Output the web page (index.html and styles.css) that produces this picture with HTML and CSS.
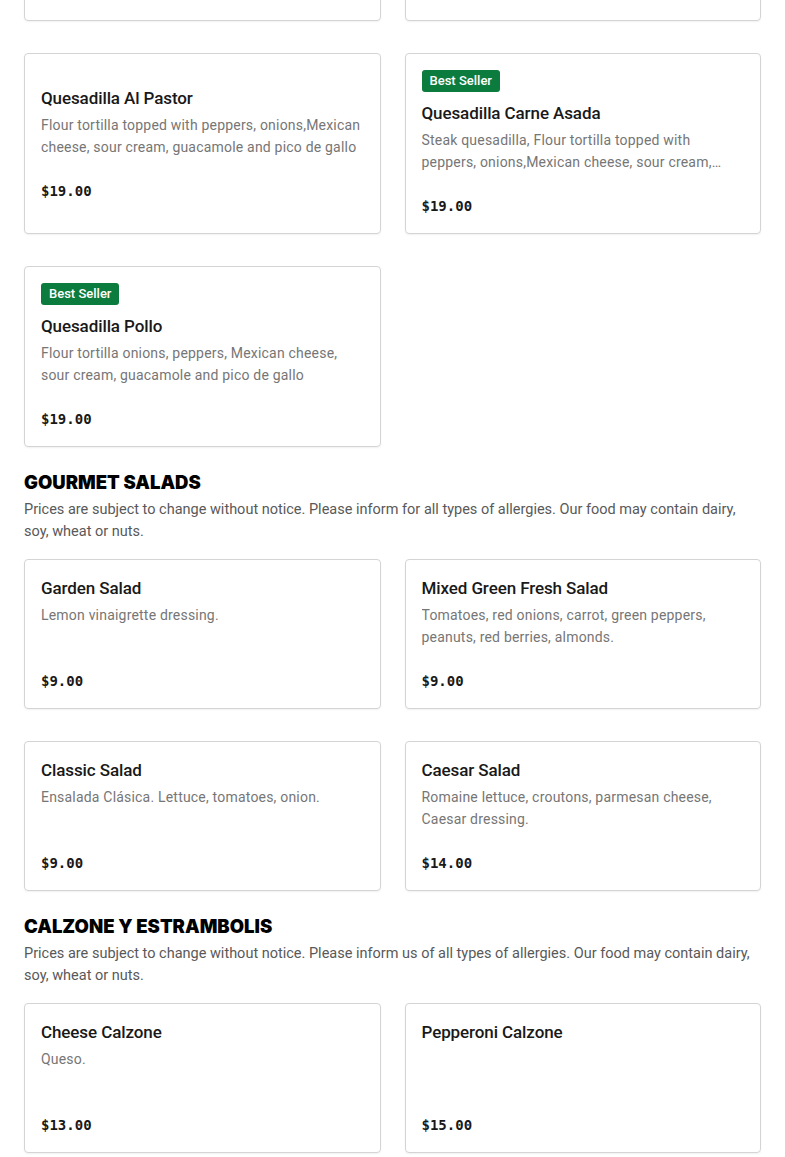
FILE: index.html
```html
<!DOCTYPE html>
<html lang="en">
<head>
    <meta charset="UTF-8">
    <meta name="viewport" content="width=device-width, initial-scale=1.0">
    <title>Menu</title>
    <link rel="stylesheet" href="styles.css">
</head>
<body>
    <div class="menu">
        <!-- Quesadillas -->
        <section class="category">
            <h2 class="category-title">QUESADILLAS</h2>
            <p class="category-note">Prices are subject to change without notice. Please inform us of all types of allergies. Our food may contain dairy, soy, wheat or nuts.</p>
            <div class="items">
                <div class="item">
                    <h3 class="item-name">Quesadilla de Queso</h3>
                    <p class="item-desc">Flour tortilla, Mexican cheese, sour cream, guacamole and pico de gallo</p>
                    <span class="item-price">$15.00</span>
                </div>
                <div class="item">
                    <h3 class="item-name">Quesadilla Camarones</h3>
                    <p class="item-desc">Shrimp quesadilla, Flour tortilla topped with peppers, onions, Mexican cheese</p>
                    <span class="item-price">$21.00</span>
                </div>
                <div class="item">
                    <h3 class="item-name">Quesadilla Al Pastor</h3>
                    <p class="item-desc">Flour tortilla topped with peppers, onions,Mexican cheese, sour cream, guacamole and pico de gallo</p>
                    <span class="item-price">$19.00</span>
                </div>
                <div class="item">
                    <span class="badge">Best Seller</span>
                    <h3 class="item-name">Quesadilla Carne Asada</h3>
                    <p class="item-desc">Steak quesadilla, Flour tortilla topped with peppers, onions,Mexican cheese, sour cream, guacamole and pico de gallo</p>
                    <span class="item-price">$19.00</span>
                </div>
                <div class="item">
                    <span class="badge">Best Seller</span>
                    <h3 class="item-name">Quesadilla Pollo</h3>
                    <p class="item-desc">Flour tortilla onions, peppers, Mexican cheese, sour cream, guacamole and pico de gallo</p>
                    <span class="item-price">$19.00</span>
                </div>
            </div>
        </section>

        <!-- Salads -->
        <section class="category">
            <h2 class="category-title">GOURMET SALADS</h2>
            <p class="category-note">Prices are subject to change without notice. Please inform for all types of allergies. Our food may contain dairy, soy, wheat or nuts.</p>
            <div class="items">
                <div class="item">
                    <h3 class="item-name">Garden Salad</h3>
                    <p class="item-desc">Lemon vinaigrette dressing.</p>
                    <span class="item-price">$9.00</span>
                </div>
                <div class="item">
                    <h3 class="item-name">Mixed Green Fresh Salad</h3>
                    <p class="item-desc">Tomatoes, red onions, carrot, green peppers, peanuts, red berries, almonds.</p>
                    <span class="item-price">$9.00</span>
                </div>
                <div class="item">
                    <h3 class="item-name">Classic Salad</h3>
                    <p class="item-desc">Ensalada Clásica. Lettuce, tomatoes, onion.</p>
                    <span class="item-price">$9.00</span>
                </div>
                <div class="item">
                    <h3 class="item-name">Caesar Salad</h3>
                    <p class="item-desc">Romaine lettuce, croutons, parmesan cheese, Caesar dressing.</p>
                    <span class="item-price">$14.00</span>
                </div>
            </div>
        </section>

        <!-- Calzones -->
        <section class="category">
            <h2 class="category-title">CALZONE Y ESTRAMBOLIS</h2>
            <p class="category-note">Prices are subject to change without notice. Please inform us of all types of allergies. Our food may contain dairy, soy, wheat or nuts.</p>
            <div class="items">
                <div class="item">
                    <h3 class="item-name">Cheese Calzone</h3>
                    <p class="item-desc">Queso.</p>
                    <span class="item-price">$13.00</span>
                </div>
                <div class="item">
                    <h3 class="item-name">Pepperoni Calzone</h3>
                    <p class="item-desc"></p>
                    <span class="item-price">$15.00</span>
                </div>
            </div>
        </section>
    </div>
</body>
</html>
```

FILE: styles.css
```css
body {
    margin: 0;
    padding: 0;
    background-color: #fff;
    font-family: 'Roboto', 'Liberation Sans', sans-serif;
    color: #191919;
}

/* page is shown scrolled down to the middle of the quesadillas */
.menu {
    display: flex;
    flex-direction: column;
    gap: 23px;
    padding: 0 24px 40px;
    margin-top: -218px;
}

.category-title {
    margin: 0;
    font-family: 'Inter', 'Liberation Sans', sans-serif;
    font-size: 18.5px;
    font-weight: 900;
    line-height: 24px;
    color: #000;
}

.category-note {
    margin: 5px 0 16px;
    font-size: 14.5px;
    line-height: 22px;
    color: #595959;
}

.items {
    display: grid;
    grid-template-columns: 1fr 1fr;
    gap: 32px 24px;
}

.item {
    display: flex;
    flex-direction: column;
    justify-content: center;
    align-items: flex-start;
    padding: 16px;
    border: 1px solid #d4d4d4;
    border-radius: 4px;
    box-shadow: 0 1px 2px rgba(0,0,0,0.06);
}

.badge {
    display: inline-block;
    height: 22px;
    line-height: 22px;
    padding: 0 8px;
    margin-bottom: 9px;
    background-color: #0b7b3e;
    color: #fff;
    font-size: 13px;
    font-weight: 500;
    border-radius: 3px;
}

.item-name {
    margin: 0;
    font-size: 17px;
    font-weight: 500;
    line-height: 24px;
    letter-spacing: -0.1px;
}

.item-desc {
    margin: 4px 0 22px;
    height: 44px;
    font-size: 14px;
    line-height: 22px;
    letter-spacing: 0.2px;
    color: #767676;
    display: -webkit-box;
    -webkit-line-clamp: 2;
    -webkit-box-orient: vertical;
    overflow: hidden;
}

.item-price {
    font-family: 'DejaVu Sans Mono', 'Liberation Mono', monospace;
    font-size: 14px;
    font-weight: bold;
    line-height: 22px;
}
```
